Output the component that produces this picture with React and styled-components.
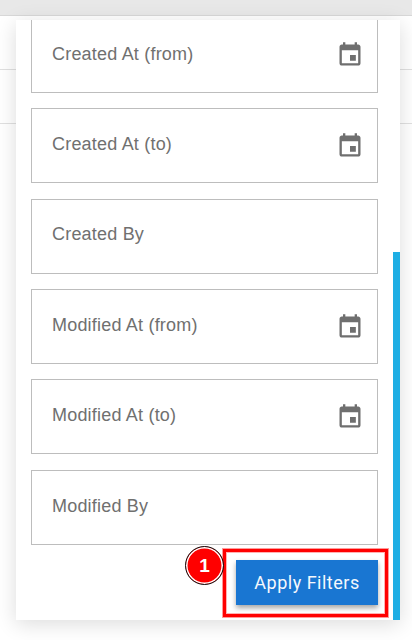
import React from "react";
import styled, { createGlobalStyle } from "styled-components";

const Global = createGlobalStyle`
  html, body { margin: 0; padding: 0; background: #fff; }
  body { font-family: "Liberation Sans", Arial, sans-serif; }
`;

const Page = styled.div`
  position: relative;
  width: 412px;
  height: 640px;
  overflow: hidden;
  background: #fff;
`;

const TopBar = styled.div`
  height: 15px;
  background: #e8e8e8;
  border-bottom: 1px solid #d8d8d8;
`;

const BackRow = styled.div`
  height: ${(p) => p.$h}px;
  border-bottom: 1px solid #e0e0e0;
`;

const Panel = styled.div`
  position: absolute;
  left: 16px;
  top: 20px;
  width: 384px;
  height: 600px;
  background: #fff;
  box-shadow: 0 4px 20px rgba(0, 0, 0, 0.14);
  overflow: hidden;
  display: flex;
  flex-direction: column;
  justify-content: flex-end;
  padding: 0 22px 15px 15px;
  box-sizing: border-box;
`;

const Fields = styled.div`
  display: flex;
  flex-direction: column;
  gap: 15.4px;
  flex-shrink: 0;
`;

const Field = styled.div`
  height: 75px;
  box-sizing: border-box;
  border: 1px solid #bdbdbd;
  padding: 0 13.5px 0 20px;
  display: flex;
  align-items: center;
  justify-content: space-between;
`;

const Label = styled.span`
  font-size: 18px;
  letter-spacing: 0.2px;
  color: #70706f;
  position: relative;
  top: -1.3px;
`;

const Footer = styled.div`
  display: flex;
  justify-content: flex-end;
  margin-top: 15.2px;
  flex-shrink: 0;
`;

const ApplyButton = styled.button`
  width: 142px;
  height: 45px;
  border: none;
  border-radius: 0;
  background: #1976d2;
  color: #f4f8fd;
  font-family: Roboto, sans-serif;
  font-size: 18px;
  letter-spacing: 0.5px;
  box-shadow: 0 3px 5px rgba(0, 0, 0, 0.35);
  padding: 0;
`;

const ScrollThumb = styled.div`
  position: absolute;
  right: 0;
  bottom: 0;
  width: 7px;
  height: 368px;
  background: #1eaee4;
`;

const Highlight = styled.div`
  position: absolute;
  left: 223px;
  top: 549px;
  width: 165px;
  height: 68px;
  box-sizing: border-box;
  border: 3px solid #f00;
  box-shadow: 0 0 0 1px rgba(255, 0, 0, 0.4), inset 0 0 0 1px rgba(255, 0, 0, 0.3);
`;

const Badge = styled.div`
  position: absolute;
  left: 185px;
  top: 546px;
  width: 39px;
  height: 39px;
  box-sizing: border-box;
  border-radius: 50%;
  background: #f00;
  border: 1.5px solid #111;
  box-shadow: inset 0 0 0 1.5px #fff;
  color: #fff;
  font: 700 19px "Liberation Sans", sans-serif;
  display: flex;
  align-items: center;
  justify-content: center;
`;

const Icon = styled.svg`
  width: 28px;
  height: 28px;
  fill: #6f6f6f;
  flex-shrink: 0;
`;

const Calendar = () => (
  <Icon viewBox="0 0 24 24">
    <path d="M17 12h-5v5h5v-5zM16 1v2H8V1H6v2H5c-1.11 0-1.99.9-1.99 2L3 19c0 1.1.89 2 2 2h14c1.1 0 2-.9 2-2V5c0-1.1-.9-2-2-2h-1V1h-2zm3 18H5V8h14v11z" />
  </Icon>
);

const items = [
  ["Created At (from)", true],
  ["Created At (to)", true],
  ["Created By", false],
  ["Modified At (from)", true],
  ["Modified At (to)", true],
  ["Modified By", false],
];

export default function App() {
  return (
    <Page>
      <Global />
      <TopBar />
      <BackRow $h={53} />
      <BackRow $h={53} />
      <Panel>
        <Fields>
          {items.map(([label, cal]) => (
            <Field key={label}>
              <Label>{label}</Label>
              {cal && <Calendar />}
            </Field>
          ))}
        </Fields>
        <Footer>
          <ApplyButton>Apply Filters</ApplyButton>
        </Footer>
        <ScrollThumb />
      </Panel>
      <Highlight />
      <Badge>1</Badge>
    </Page>
  );
}
